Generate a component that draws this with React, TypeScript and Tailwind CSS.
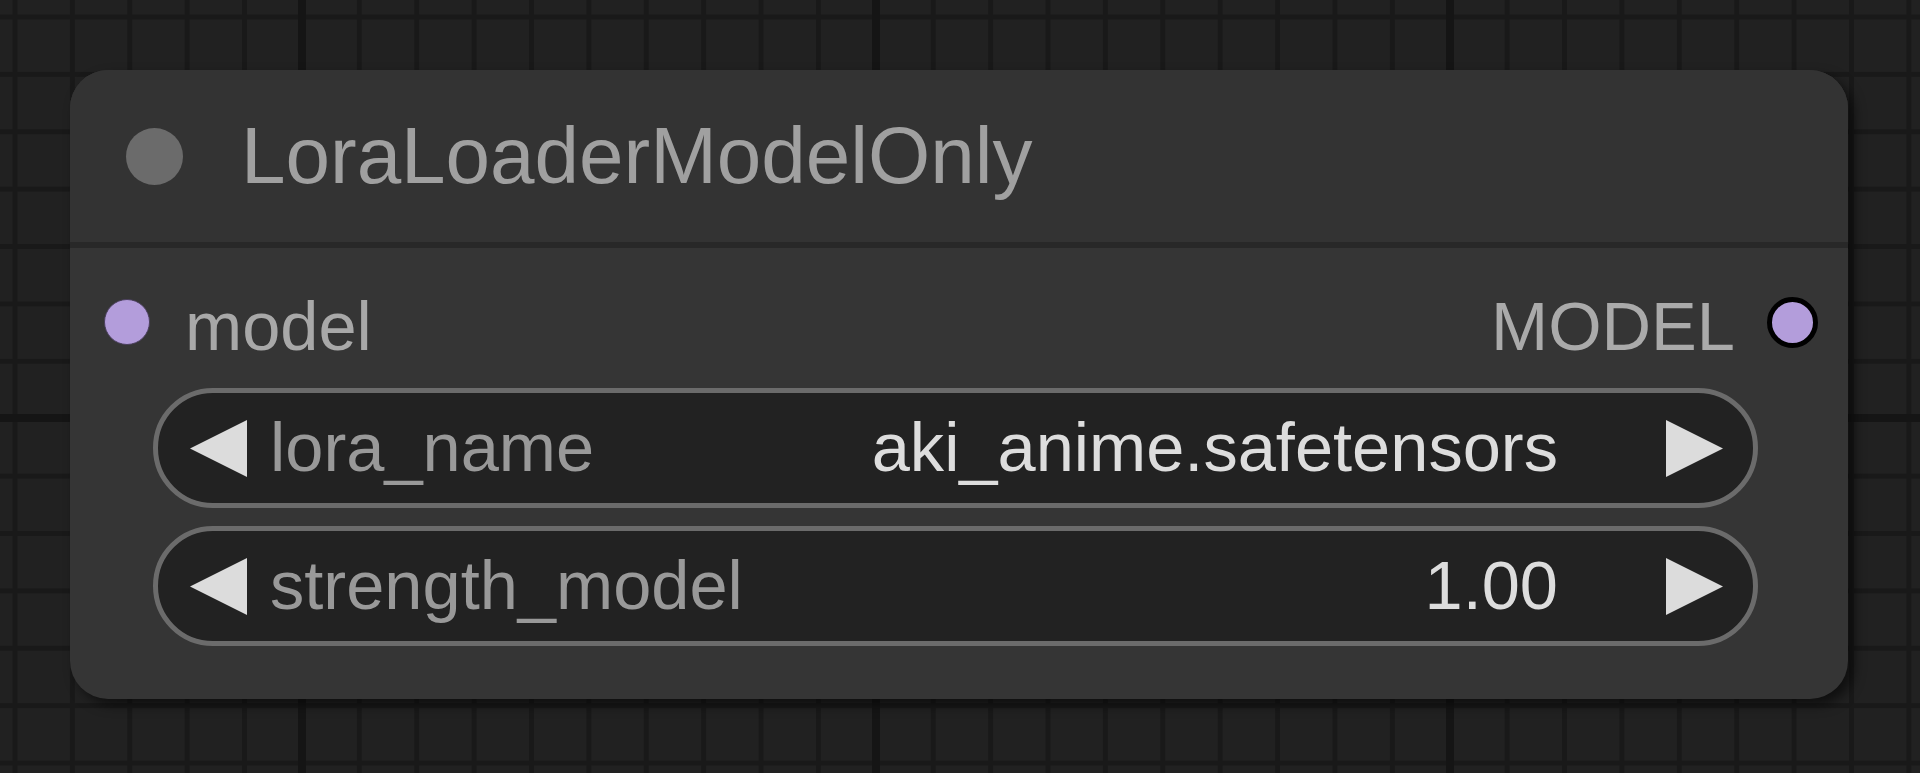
import React from "react";

type ComboWidgetProps = {
  label: string;
  value: string;
};

function Arrow({ dir }: { dir: "left" | "right" }) {
  return (
    <svg width="57" height="57" viewBox="0 0 57 57" className="shrink-0">
      {dir === "left" ? (
        <polygon points="57,0 0,28.5 57,57" fill="#dcdcdc" />
      ) : (
        <polygon points="0,0 57,28.5 0,57" fill="#dcdcdc" />
      )}
    </svg>
  );
}

function ComboWidget({ label, value }: ComboWidgetProps) {
  return (
    <div className="flex h-[120px] items-center rounded-full border-[5px] border-[#6b6b6b] bg-[#222222] pl-[32px] pr-[30px]">
      <Arrow dir="left" />
      <span className="ml-[23px] text-[68.6px] leading-none text-[#999999]">{label}</span>
      <div className="flex-1" />
      <span className="mr-[108px] text-[68.6px] leading-none text-[#dddddd]">{value}</span>
      <Arrow dir="right" />
    </div>
  );
}

export default function App() {
  return (
    <div className="h-[773px] w-full overflow-hidden bg-[#212121] bg-[linear-gradient(to_right,#151515_0_8px,transparent_8px),linear-gradient(to_bottom,#151515_0_8px,transparent_8px),linear-gradient(to_right,#191919_0_5px,transparent_5px),linear-gradient(to_bottom,#191919_0_5px,transparent_5px)] bg-[size:574px_100%,100%_574px,57.4px_57.4px,57.4px_57.4px] bg-[position:298px_0,0_414px,12.5px_14.5px,12.5px_14.5px] pl-[70px] pt-[70px] font-['Liberation_Sans',Arial,sans-serif]">
      <div className="flex h-[629px] w-[1778px] flex-col overflow-hidden rounded-[38px] bg-[#353535] shadow-[6px_6px_12px_rgba(0,0,0,0.55)]">
        {/* title bar */}
        <div className="flex h-[172px] shrink-0 items-center gap-[58px] bg-[#333333] pl-[56px]">
          <div className="h-[57px] w-[57px] rounded-full bg-[#6b6b6b]" />
          <span className="text-[80px] leading-none text-[#a0a0a0]">LoraLoaderModelOnly</span>
        </div>
        <div className="h-[6px] shrink-0 bg-[#282828]" />

        {/* slots */}
        <div className="flex flex-col pt-[45px]">
          <div className="flex h-[68px] items-center justify-between pl-[34px] pr-[30px]">
            <div className="flex items-center gap-[35px]">
              <div className="mb-[10px] h-[46px] w-[46px] rounded-full border border-[#4a3f5c] bg-[#b39ddb]" />
              <span className="text-[68.6px] leading-none text-[#a8a8a8]">model</span>
            </div>
            <div className="flex items-center gap-[32px]">
              <span className="text-[68.6px] leading-none text-[#aaaaaa]">MODEL</span>
              <div className="mb-[10px] h-[51px] w-[51px] rounded-full border-[5px] border-black bg-[#b39ddb]" />
            </div>
          </div>

          {/* widgets */}
          <div className="ml-[83px] mt-[27px] flex w-[1605px] flex-col gap-[18px]">
            <ComboWidget label="lora_name" value="aki_anime.safetensors" />
            <ComboWidget label="strength_model" value="1.00" />
          </div>
        </div>
      </div>
    </div>
  );
}
